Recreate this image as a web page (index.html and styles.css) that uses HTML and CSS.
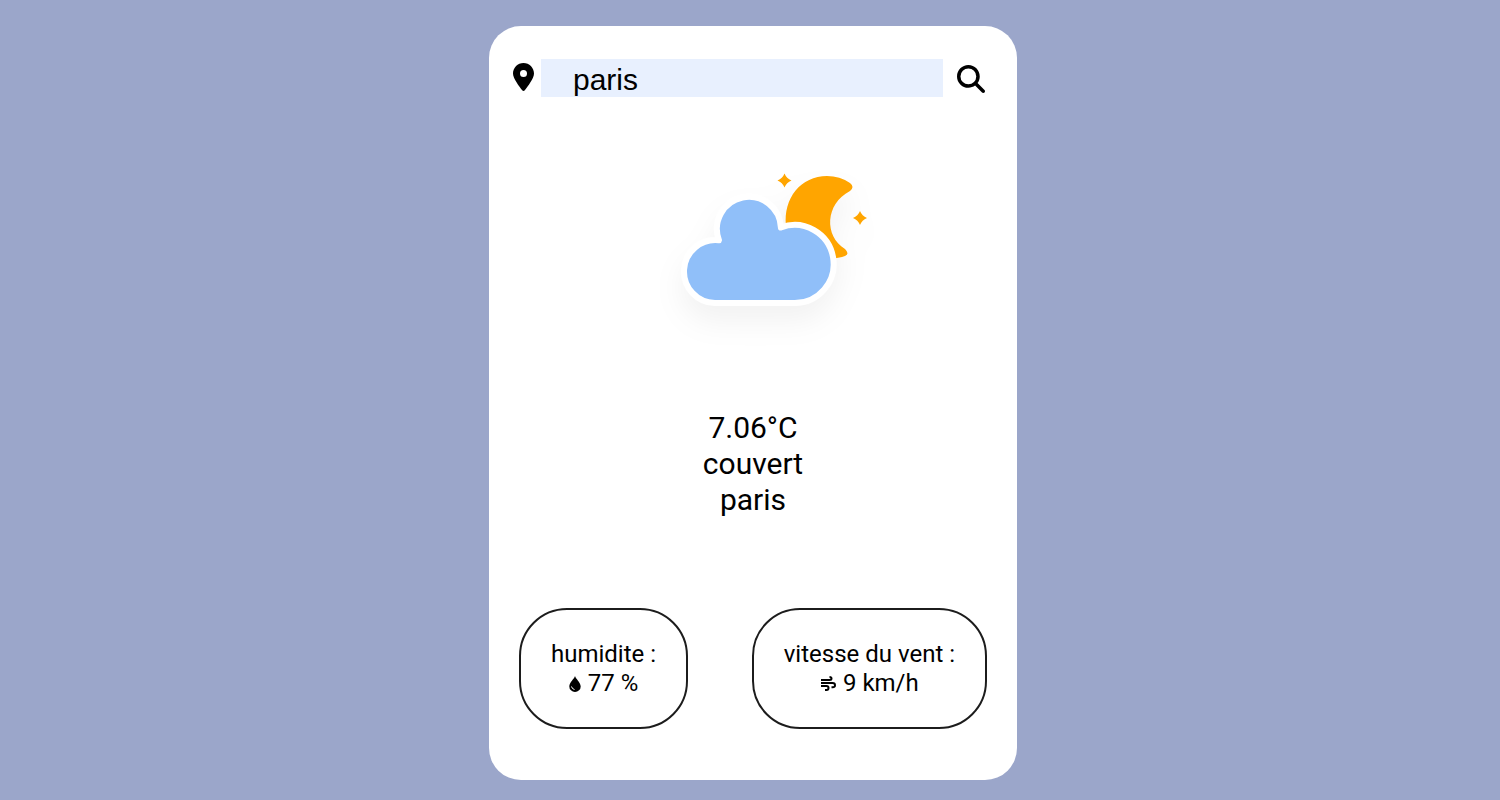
FILE: index.html
```html
<!DOCTYPE html>
<html lang="fr">
<head>
<meta charset="utf-8">
<meta name="viewport" content="width=device-width, initial-scale=1">
<title>Météo</title>
<link rel="stylesheet" href="styles.css">
</head>
<body>
<main class="card">
  <form class="search" role="search">
    <label class="search-label" for="city" aria-label="Ville">
      <svg class="pin" viewBox="0 0 384 512" aria-hidden="true"><path d="M215.700 499.200C267 435 384 279.400 384 192C384 86 298 0 192 0S0 86 0 192c0 87.400 117 243 168.300 307.200c12.300 15.300 35.100 15.300 47.400 0zM192 128a64 64 0 1 1 0 128 64 64 0 1 1 0-128z"/></svg>
    </label>
    <input class="search-input" id="city" type="text" value="paris">
    <button class="search-button" type="button" aria-label="Rechercher">
      <svg class="glass" viewBox="0 0 512 512" aria-hidden="true"><path d="M416 208c0 45.900-14.900 88.300-40 122.700L502.600 457.400c12.500 12.500 12.500 32.800 0 45.300s-32.800 12.500-45.300 0L330.700 376c-34.400 25.200-76.800 40-122.700 40C93.100 416 0 322.900 0 208S93.100 0 208 0S416 93.100 416 208zM208 352a144 144 0 1 0 0-288 144 144 0 1 0 0 288z"/></svg>
    </button>
  </form>
  <section class="weather">
    <svg class="weather-icon" viewBox="-37 0 260 200" aria-hidden="true">
      <g class="shadowed">
        <g class="night">
          <path d="M126 76C123 48 141 26 167 26Q180 26 190 33Q195 37 190 41C165 54 164 86 185 99Q190 104 185 106Q180 108 168 109Z"/>
          <path d="M124.500 23.500Q126.500 28.500 131.500 30.500Q126.500 32.500 124.500 37.500Q122.500 32.500 117.500 30.500Q122.500 28.500 124.500 23.500Z"/>
          <path d="M200 61Q202 66 207 68Q202 70 200 75Q198 70 193 68Q198 66 200 61Z"/>
        </g>
        <path class="cloud" d="M55 153A31.500 31.500 0 1 1 59 90.200A32 32 0 1 1 120.900 77.500A39 39 0 1 1 134 153Z"/>
      </g>
    </svg>
    <p class="reading">7.06°C</p>
    <p class="reading">couvert</p>
    <p class="reading">paris</p>
  </section>
  <section class="details">
    <div class="detail">
      <p>humidite :</p>
      <p class="value">
        <svg class="drop" viewBox="0 0 12 16" aria-hidden="true"><path d="M6 0C6.500 2.500 11.700 6.500 11.700 10.400A5.700 5.500 0 0 1 .3 10.400C.3 6.500 5.500 2.500 6 0Z"/><path class="shine" d="M2.500 10.500Q3 13 5.500 13.500"/></svg>
        <span>77 %</span>
      </p>
    </div>
    <div class="detail">
      <p>vitesse du vent :</p>
      <p class="value">
        <svg class="wind" viewBox="0 0 16 16" aria-hidden="true"><path d="M1 4H9.500Q11.500 4 11.500 2.500T9.500 1M1 7H12.500Q15 7 15 9.200T12.500 11.300H11.500M1 10H6.500Q8.500 10 8.500 12T6.500 14H5"/></svg>
        <span>9 km/h</span>
      </p>
    </div>
  </section>
</main>
</body>
</html>
```
FILE: styles.css
```css
* {
  box-sizing: border-box;
}

body {
  margin: 0;
  padding: 26px 0 20px 6px;
  min-height: 100vh;
  background: #9ba6ca;
  color: #000;
  font-family: Roboto, "Liberation Sans", sans-serif;
}

p {
  margin: 0;
}

.card {
  width: 90%;
  max-width: 528px;
  margin: 0 auto;
  padding: 33px 24px 51px;
  border-radius: 32px;
  background: #fff;
}

.search {
  display: flex;
  align-items: center;
  margin-right: 8px;
}

.search-label {
  display: flex;
  width: 28px;
  padding-bottom: 2px;
}

.pin {
  width: 21px;
  height: 28px;
}

.search-input {
  flex: 1;
  min-width: 0;
  height: 38px;
  padding: 4px 32px 0;
  border: 0;
  background: #e8f0fe;
  color: #000;
  font: 30px "Liberation Sans", Arial, sans-serif;
}

.search-button {
  display: flex;
  padding: 2px 0 0 14px;
  border: 0;
  background: none;
}

.glass {
  width: 28px;
  height: 28px;
}

.weather {
  padding-top: 53px;
  text-align: center;
}

.weather-icon {
  display: block;
  width: 260px;
  height: 200px;
  margin: 0 auto 60px;
}

.shadowed {
  filter: drop-shadow(0 16px 14px rgb(0 0 0 / 5%));
}

.night {
  fill: #ffa500;
}

.cloud {
  fill: #90bff9;
  stroke: #fff;
  stroke-width: 6px;
  stroke-linejoin: round;
}

.reading {
  font-size: 30px;
  line-height: 36px;
}

.details {
  display: flex;
  flex-wrap: wrap;
  justify-content: space-between;
  gap: 16px;
  margin: 90px 6px 0;
  font-size: 24px;
  line-height: 29px;
  text-align: center;
}

.detail {
  padding: 30px 30px 29px;
  border: 2px solid #1c1c1c;
  border-radius: 48px;
}

.value {
  display: flex;
  align-items: center;
  justify-content: center;
  gap: 7px;
}

.drop {
  width: 12px;
  height: 16px;
}

.shine {
  fill: none;
  stroke: #fff;
}

.wind {
  width: 16px;
  height: 16px;
  fill: none;
  stroke: #000;
  stroke-width: 2px;
}
```
